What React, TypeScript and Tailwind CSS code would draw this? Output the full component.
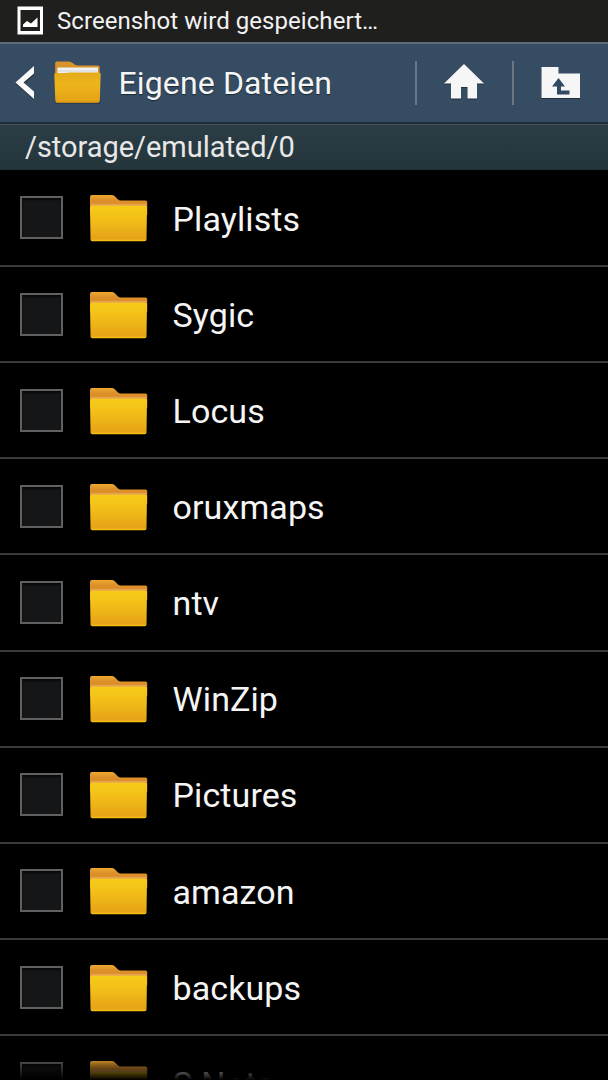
const FOLDERS = [
  'Playlists',
  'Sygic',
  'Locus',
  'oruxmaps',
  'ntv',
  'WinZip',
  'Pictures',
  'amazon',
  'backups',
  'S Note',
];

function FolderIcon() {
  return (
    <svg viewBox="0 0 58 48" className="h-[48px] w-[58px] shrink-0">
      <defs>
        <linearGradient id="folder-back" x1="0" y1="0" x2="0" y2="1">
          <stop offset="0" stopColor="#eca92f" />
          <stop offset="0.25" stopColor="#dd902a" />
          <stop offset="1" stopColor="#dd902a" />
        </linearGradient>
        <linearGradient id="folder-front" x1="0" y1="0" x2="0" y2="1">
          <stop offset="0" stopColor="#f7cc18" />
          <stop offset="0.4" stopColor="#f2be18" />
          <stop offset="0.93" stopColor="#e6a317" />
          <stop offset="1" stopColor="#f5bd13" />
        </linearGradient>
      </defs>
      <path d="M0 2Q0 0 2 0H22Q24 0 25.500 2L28 4.500Q29 5.400 31 5.400H55.500Q57.200 5.400 57.200 7V20H0Z" fill="url(#folder-back)" />
      <path d="M1 10H56.500" stroke="#f0b878" strokeWidth="1.200" />
      <path d="M0 12.500Q0 10.700 2 10.700H55Q57 10.700 57 12.500L56.500 44.500Q56.500 46.200 54.500 46.200H2.500Q0.500 46.200 0.500 44.500Z" fill="url(#folder-front)" />
      <path d="M1.500 45.500H55.500" stroke="#f8c313" strokeWidth="0.800" />
    </svg>
  );
}

function AppFolderIcon() {
  return (
    <svg viewBox="0 0 48 44" className="h-[44px] w-[48px] shrink-0">
      <defs>
        <linearGradient id="app-folder" x1="0" y1="0" x2="0" y2="1">
          <stop offset="0" stopColor="#e5ab1c" />
          <stop offset="0.4" stopColor="#edb41c" />
          <stop offset="1" stopColor="#e4a216" />
        </linearGradient>
      </defs>
      <path d="M1 41Q1 43 3 43H44.500Q46.500 43 46.500 41V39H1Z" fill="#263c50" />
      <path d="M1.200 2Q1.200 0.500 3 0.500H15Q17 0.500 19 2.200Q21.500 4.400 24 4.400H44Q45.700 4.400 45.700 6V20H1.200Z" fill="#d9932c" />
      <path d="M3.500 6.500H44V13H3.500Z" fill="#f0f0f0" />
      <path d="M3.500 10H44" stroke="#d2d4d6" strokeWidth="1" />
      <path d="M0.300 13.500Q0.300 12 2 12H12Q13.500 11.400 15 11.400H45Q46.700 11.400 46.700 13L45.800 39.500Q45.800 41.700 43.500 41.700H3.500Q1.400 41.700 1.300 39.500Z" fill="url(#app-folder)" />
      <path d="M2.500 41.200H44.500" stroke="#c78a16" strokeWidth="1" />
    </svg>
  );
}

function StatusBar() {
  return (
    <div className="flex h-[42px] items-center bg-[#1f1f1e] pl-[17px]">
      <svg viewBox="0 0 26 29" className="mt-[-1px] h-[29px] w-[26px]">
        <path d="M0.500 0.500H26V28.500H0.500ZM3.500 4V25H23V4Z" fill="#fff" fillRule="evenodd" />
        <path d="M6 21V18.500L10 15L14 17.500L20.500 11.500V21Z" fill="#fff" />
      </svg>
      <span className="ml-[14px] text-[24px] leading-[28px] tracking-[0.06px] whitespace-nowrap text-[#f2f2f2]">
        Screenshot wird gespeichert…
      </span>
    </div>
  );
}

function ActionBar() {
  return (
    <header className="flex h-[82px] items-center border-t-2 border-b-2 border-t-[#5f6d77] border-b-[#1d2c38] bg-[#354c62]">
      <svg viewBox="0 0 20 34" className="ml-[15px] h-[34px] w-[20px] shrink-0">
        <path d="M19 1V9L9.500 17.500L19 26V34L0.500 17.500Z" fill="#22303e" />
        <path d="M19 0V7.500L8.500 16.500L19 25.500V33L0.500 16.500Z" fill="#fafafa" />
      </svg>
      <div className="ml-[19px]">
        <AppFolderIcon />
      </div>
      <h1 className="ml-[16.5px] flex-1 text-[32px] leading-[40px] tracking-[0.13px] whitespace-nowrap text-[#f5f5f5] [text-shadow:0_1px_1px_#1c2935]">
        Eigene Dateien
      </h1>
      <div className="flex h-[44px] w-[97px] items-center border-l-2 border-[#6b7884] pl-[27px]">
        <svg viewBox="0 0 40 37" className="mt-[-1px] h-[37px] w-[40px]">
          <path d="M20 1L40 20.500H33V35.500H23.500V24H17V35.500H7V20.500H0Z" fill="#22303e" />
          <path d="M20 0L40 19.500H33V34.500H23.500V23H17V34.500H7V19.500H0Z" fill="#f6f6f6" />
        </svg>
      </div>
      <div className="flex h-[44px] w-[96px] items-center border-l-2 border-[#6b7884] pl-[27px]">
        <svg viewBox="0 0 40 34" className="h-[34px] w-[40px]">
          <path d="M0.500 2H17.500V8H39V33H0.500Z" fill="#22303e" />
          <path d="M0.500 1H17.500V7.500H39V32H0.500Z" fill="#f6f6f6" />
          <path d="M17.500 12L24 20.500H20V24.500H28.500V28.500H16V20.500H11Z" fill="#304b61" />
        </svg>
      </div>
    </header>
  );
}

function FolderRow({ name }: { name: string }) {
  return (
    <li className="flex h-[96.15px] shrink-0 items-start border-b-2 border-[#3b3b3b] pl-[20px]">
      <span className="mt-[25.6px] h-[43px] w-[43px] shrink-0 border-2 border-[#606060] bg-[#151618] shadow-[inset_0_2px_2px_#08090a]" />
      <span className="mt-[24.6px] ml-[27px]">
        <FolderIcon />
      </span>
      <span className="mt-[27.8px] ml-[24.5px] text-[34px] leading-[40px] tracking-[0.1px] whitespace-nowrap text-[#f5f5f5]">
        {name}
      </span>
    </li>
  );
}

export default function App() {
  return (
    <div className="relative flex h-[1080px] w-[608px] flex-col overflow-hidden bg-black font-['Roboto','Liberation_Sans',sans-serif]">
      <StatusBar />
      <ActionBar />
      <div className="flex h-[46px] shrink-0 items-center border-t border-b border-t-[#43545c] border-b-[#202f39] bg-linear-to-b from-[#2b3c46] to-[#24363b] pl-[25px] text-[29px] leading-[36px] tracking-[-0.04px] text-[#e8e8e8]">
        /storage/emulated/0
      </div>
      <ul className="flex min-h-0 flex-1 flex-col overflow-hidden pt-[0.8px]">
        {FOLDERS.map((name) => (
          <FolderRow key={name} name={name} />
        ))}
      </ul>
      {/* fade over the row that is cut off by the screen edge */}
      <div className="pointer-events-none absolute inset-x-0 bottom-0 h-[24px] bg-linear-to-b from-transparent to-black" />
    </div>
  );
}
